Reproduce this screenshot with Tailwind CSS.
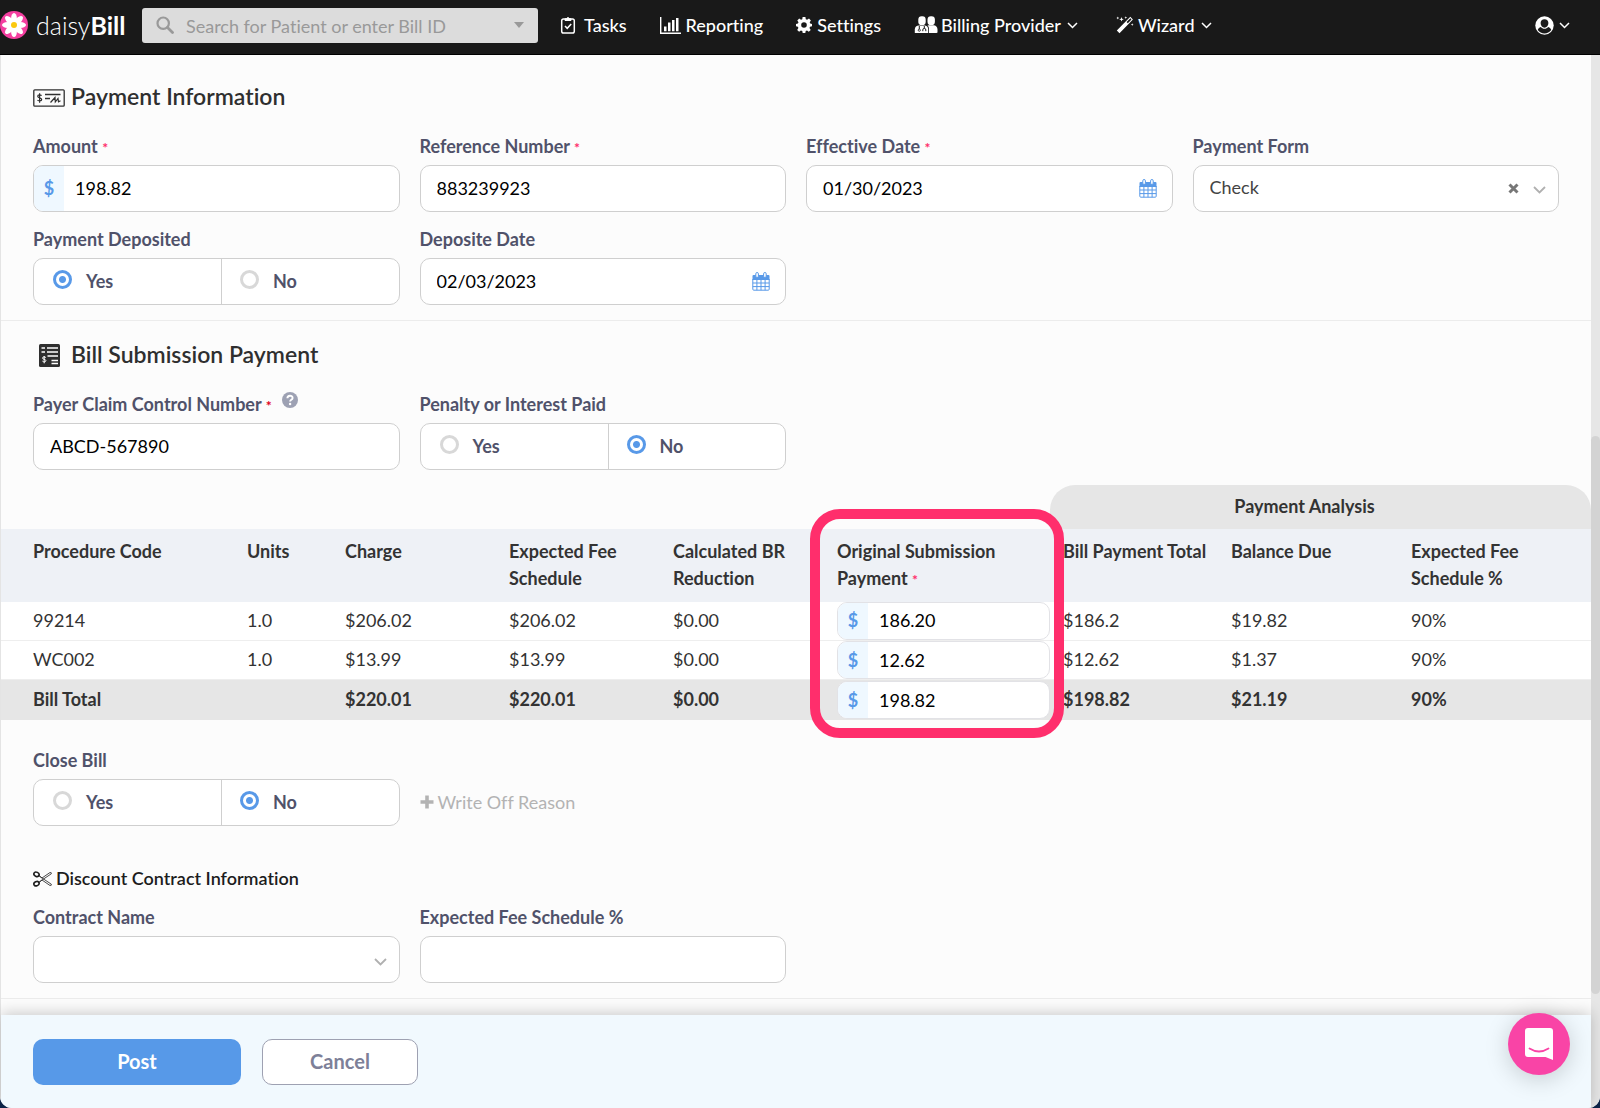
<!DOCTYPE html>
<html lang="en">
<head>
    <meta charset="UTF-8">
    <meta name="viewport" content="width=device-width, initial-scale=1.0">
    <title>daisyBill - Payment</title>
    <script src="https://cdn.jsdelivr.net/npm/@tailwindcss/browser@4"></script>
</head>
<body class="bg-[#0c2347] font-['Lato','Noto_Sans',sans-serif] [font-variant-ligatures:none] text-lg leading-6 text-[#333]">

<div class="h-screen flex flex-col overflow-hidden rounded-b-xl bg-[#fcfcfc]">

    <!-- NAVBAR -->
    <header class="flex items-center shrink-0 h-[55px] pb-1 bg-[#191919] border-b border-black text-white">
        <a href="#" class="flex items-center gap-2 w-[142px]">
            <svg class="w-7 h-7" viewBox="0 0 28 28">
                <circle cx="14" cy="14" r="14" fill="#f43fa0"/>
                <g fill="#fff">
                    <ellipse cx="14" cy="7.500" rx="2.900" ry="5.500"/>
                    <ellipse cx="14" cy="7.500" rx="2.900" ry="5.500" transform="rotate(45 14 14)"/>
                    <ellipse cx="14" cy="7.500" rx="2.900" ry="5.500" transform="rotate(90 14 14)"/>
                    <ellipse cx="14" cy="7.500" rx="2.900" ry="5.500" transform="rotate(135 14 14)"/>
                    <ellipse cx="14" cy="7.500" rx="2.900" ry="5.500" transform="rotate(180 14 14)"/>
                    <ellipse cx="14" cy="7.500" rx="2.900" ry="5.500" transform="rotate(225 14 14)"/>
                    <ellipse cx="14" cy="7.500" rx="2.900" ry="5.500" transform="rotate(270 14 14)"/>
                    <ellipse cx="14" cy="7.500" rx="2.900" ry="5.500" transform="rotate(315 14 14)"/>
                </g>
                <circle cx="14" cy="14" r="3" fill="#fbc90f"/>
            </svg>
            <span class="text-[25px] leading-7 font-light">daisy<b class="font-bold">Bill</b></span>
        </a>
        <div class="flex items-center w-[396px] h-[35px] rounded-[3px] bg-[#dcdcdc] px-3.5 text-[#999]">
            <svg class="w-[18px] h-[18px] shrink-0" viewBox="0 0 18 18" fill="none" stroke="currentColor"><circle cx="7.200" cy="7.200" r="5.700" stroke-width="2.200"/><path d="M11.500 11.500l5 5" stroke-width="2.800" stroke-linecap="round"/></svg>
            <input type="text" aria-label="Search" placeholder="Search for Patient or enter Bill ID" class="flex-1 min-w-0 ml-3 pt-0.5 bg-transparent outline-none placeholder:text-[#999]">
            <button type="button" aria-label="Open search list"><svg class="w-2.5 h-1.5" viewBox="0 0 10 6"><path d="M0 0h10L5 6z" fill="currentColor"/></svg></button>
        </div>
        <nav class="flex items-center flex-1 font-medium">
            <a href="#" class="flex items-center gap-2 ml-[22px]">
                <svg class="w-4 h-[18px]" viewBox="0 0 16 18" fill="none" stroke="currentColor" stroke-width="1.500"><rect x="1.700" y="3" width="12.600" height="14" rx="1.800"/><path d="M5 4.500V2.800h1.400a1.700 1.700 0 013.200 0H11v1.700z" fill="currentColor" stroke-width="1"/><path d="M5 10l2.200 2.300 4-4.300"/></svg>
                Tasks
            </a>
            <a href="#" class="flex items-center gap-[5px] ml-[33px]">
                <svg class="w-[21px] h-[17px]" viewBox="0 0 21 17"><path d="M.7 0v16.300H21" fill="none" stroke="currentColor" stroke-width="1.400"/><path d="M4 9.500h2.500v4.800H4zM8 5.500h2.500v8.800H8zM12 3h2.500v11.300H12zM16 1h2.500v13.300H16z" fill="currentColor"/></svg>
                Reporting
            </a>
            <a href="#" class="flex items-center gap-[5px] ml-[33px]">
                <svg class="w-4 h-4" viewBox="0 0 16 16" fill="currentColor"><path fill-rule="evenodd" d="M6.600 0h2.800l.4 2.200 1.300.55L13 1.500l1.900 1.900-1.200 1.900.5 1.300 1.800.4v2.300l-2 .5-.5 1.300 1.200 1.800-1.900 1.900-1.800-1.200-1.300.5-.4 2H6.700l-.4-2-1.400-.6-1.800 1.300-1.900-1.900 1.200-1.900-.5-1.200-1.900-.5V7l1.900-.4.6-1.400-1.200-1.800L3.200 1.500 5 2.700l1.300-.5zM8 5.200a2.800 2.800 0 100 5.600 2.800 2.800 0 000-5.600z"/></svg>
                Settings
            </a>
            <a href="#" class="flex items-center gap-[3px] ml-[33px]">
                <svg class="w-6 h-[18px]" viewBox="0 0 24 18" fill="currentColor"><rect x="4.300" y=".3" width="7.400" height="8.800" rx="3.400"/><rect x="13.500" y=".3" width="7.400" height="8.800" rx="3.400"/><path d="M.8 17v-3.500C.8 10.800 2.500 9.800 5 9.500h6c2.300.3 3.200 1.800 3.200 4V17z"/><path d="M15 17v-3.500c0-1.800-.5-3-1.500-3.900l1.300-.3h4.700c2.400.2 4 1.500 4 4.200V16.500l-1 .5z"/><path d="M5.300 10v3M10.300 10v2.200M8.800 15.200v-1.300a1.500 1.500 0 013 0v1.300" fill="none" stroke="#191919" stroke-width="1"/><circle cx="5.300" cy="14.200" r="1.100" fill="none" stroke="#191919" stroke-width=".8"/></svg>
                Billing Provider
                <svg class="w-[11px] h-[7px] ml-[3px]" viewBox="0 0 11 7"><path d="M1 1l4.500 4.500L10 1" fill="none" stroke="currentColor" stroke-width="1.500"/></svg>
            </a>
            <a href="#" class="flex items-center gap-1 ml-[38px]">
                <svg class="w-[18px] h-[18px]" viewBox="0 0 18 18" fill="currentColor"><path fill-rule="evenodd" d="M14.300.8l2.600 2.600L3.500 17.300.8 14.600zM14.400 2.200l-3.800 3.900 1.200 1.200 3.700-3.900z"/><path d="M5.500 1l.6 1.700 1.700.6-1.700.6-.6 1.700-.6-1.700-1.700-.6 1.700-.6zM1.800.6l.4 1 1 .4-1 .4-.4 1-.4-1-1-.4 1-.4zM9.800.2l.4 1 1 .4-1 .4-.4 1-.4-1-1-.4 1-.4zM16.200 7.200l.4 1 1 .4-1 .4-.4 1-.4-1-1-.4 1-.4z"/></svg>
                Wizard
                <svg class="w-[11px] h-[7px] ml-0.5" viewBox="0 0 11 7"><path d="M1 1l4.500 4.500L10 1" fill="none" stroke="currentColor" stroke-width="1.500"/></svg>
            </a>
        </nav>
        <button type="button" aria-label="Account" class="flex items-center gap-[5px] mr-[30px]">
            <svg class="w-[19px] h-[19px]" viewBox="0 0 19 19"><circle cx="9.500" cy="9.500" r="9.200" fill="#fff"/><path d="M9.500 3.200c2.400 0 3.900 1.500 3.900 3.900s-1.600 4.600-3.900 4.600-3.900-2.200-3.900-4.600 1.500-3.900 3.900-3.900z" fill="#191919"/><path d="M5.800 11c-1.700.5-2.700 1.600-3 3.100 1.700 2.300 4 3.400 6.700 3.400s5-1.100 6.700-3.400c-.3-1.500-1.300-2.600-3-3.100-1 1.200-2.200 1.800-3.700 1.800S6.800 12.200 5.800 11z" fill="#191919"/></svg>
            <svg class="w-[11px] h-[7px]" viewBox="0 0 11 7"><path d="M1 1l4.500 4.500L10 1" fill="none" stroke="currentColor" stroke-width="1.500"/></svg>
        </button>
    </header>

    <div class="flex flex-1 min-h-0">
        <div class="flex flex-col flex-1 min-w-0 border-l border-[#e4e4e4]">
            <main class="flex-1 min-h-0 overflow-hidden">

                <!-- PAYMENT INFORMATION -->
                <section class="px-8 pt-[25px] pb-[15px] border-b border-[#ececec]">
                    <h2 class="flex items-center gap-1.5 mb-[22px] text-[23px] leading-8 font-semibold text-[#2f2f2f]">
                        <svg class="w-8 h-[18px] mt-1" viewBox="0 0 32 18" fill="none" stroke="currentColor"><rect x=".8" y=".8" width="30.400" height="16.400" rx="1" stroke-width="1.300"/><path d="M8.500 6.700C8 5.800 4.700 5.400 4.700 7.300c0 1.900 4 1.300 4 3.200 0 1.800-3.500 1.600-4.200.5M6.600 4.200v9.600" stroke-width="1.200"/><path d="M12 5.500h15.500M12 9.500h5" stroke-width="1.300"/><path d="M17.500 13.500l4.500-5 .3 4.500 2.700-3.500.5 3.300 2-1" stroke-width="1.200"/></svg>
                        Payment Information
                    </h2>
                    <div class="grid grid-cols-4 gap-x-5 gap-y-[15px]">
                        <div>
                            <label for="amount" class="block mb-[7px] font-bold text-[#50526a]">Amount <span class="text-sm text-[#ff2d6b]">*</span></label>
                            <div class="flex h-[47px] rounded-[10px] border border-[#cfcfcf] bg-white overflow-hidden">
                                <span class="flex items-center justify-center w-[30px] pb-0.5 bg-[#eff8ff] text-[#5899e8] font-bold">$</span>
                                <input id="amount" type="text" value="198.82" class="flex-1 min-w-0 px-[11px] pb-0.5 text-black outline-none">
                            </div>
                        </div>
                        <div>
                            <label for="refNumber" class="block mb-[7px] font-bold text-[#50526a]">Reference Number <span class="text-sm text-[#ff2d6b]">*</span></label>
                            <input id="refNumber" type="text" value="883239923" class="block w-full h-[47px] px-4 pb-0.5 rounded-[10px] border border-[#cfcfcf] bg-white text-black outline-none">
                        </div>
                        <div>
                            <label for="effDate" class="block mb-[7px] font-bold text-[#50526a]">Effective Date <span class="text-sm text-[#ff2d6b]">*</span></label>
                            <div class="flex items-center h-[47px] pr-[15px] rounded-[10px] border border-[#cfcfcf] bg-white">
                                <input id="effDate" type="text" value="01/30/2023" class="flex-1 min-w-0 px-4 pb-0.5 text-black outline-none">
                                <svg class="w-[18px] h-[19px]" viewBox="0 0 18 19"><path d="M1.500 3h15q1 0 1 1v4H.5V4q0-1 1-1z" fill="#5899e8"/><path d="M.8 7v10.200q0 1 1 1h14.400q1 0 1-1V7M.8 11h16.400M.8 14.600h16.400M4.900 7.500v10.700M9 7.500v10.700M13.100 7.500v10.700" fill="none" stroke="#5899e8" stroke-width="1"/><rect x="3.800" y=".5" width="2.600" height="5" rx="1.300" fill="#fff" stroke="#5899e8"/><rect x="11.600" y=".5" width="2.600" height="5" rx="1.300" fill="#fff" stroke="#5899e8"/></svg>
                            </div>
                        </div>
                        <div>
                            <label for="payForm" class="block mb-[7px] font-bold text-[#50526a]">Payment Form</label>
                            <div class="flex items-center h-[47px] pr-3 rounded-[10px] border border-[#cfcfcf] bg-white">
                                <select id="payForm" class="appearance-none flex-1 min-w-0 px-4 pb-[3px] text-[#444] outline-none">
                                    <option>Check</option>
                                    <option>EFT</option>
                                </select>
                                <button type="button" aria-label="Clear" class="mr-3.5"><svg class="w-[11px] h-[11px]" viewBox="0 0 11 11"><path d="M1.500 1.500l8 8M9.500 1.500l-8 8" stroke="#777" stroke-width="3"/></svg></button>
                                <svg class="w-[13px] h-2 mt-0.5" viewBox="0 0 13 8"><path d="M1 1l5.500 5.500L12 1" fill="none" stroke="#b0b0b0" stroke-width="1.800"/></svg>
                            </div>
                        </div>
                        <fieldset>
                            <legend class="mb-[7px] font-bold text-[#50526a]">Payment Deposited</legend>
                            <div class="flex h-[47px] rounded-[10px] border border-[#cfcfcf] bg-white font-bold text-[#50526a]">
                                <label class="flex items-center gap-3.5 w-[188px] pl-[19px] pb-0.5 border-r border-[#cfcfcf]"><input type="radio" name="deposited" checked class="appearance-none w-[19px] h-[19px] mb-[3px] rounded-full border-[3px] border-[#d8d8d8] checked:border-[#5899e8] checked:bg-[radial-gradient(circle,#5899e8_3px,white_4px)]">Yes</label>
                                <label class="flex items-center gap-3.5 flex-1 pl-[18px] pb-0.5"><input type="radio" name="deposited" class="appearance-none w-[19px] h-[19px] mb-[3px] rounded-full border-[3px] border-[#d8d8d8] checked:border-[#5899e8] checked:bg-[radial-gradient(circle,#5899e8_3px,white_4px)]">No</label>
                            </div>
                        </fieldset>
                        <div>
                            <label for="depDate" class="block mb-[7px] font-bold text-[#50526a]">Deposite Date</label>
                            <div class="flex items-center h-[47px] pr-[15px] rounded-[10px] border border-[#cfcfcf] bg-white">
                                <input id="depDate" type="text" value="02/03/2023" class="flex-1 min-w-0 px-4 pb-0.5 text-black outline-none">
                                <svg class="w-[18px] h-[19px]" viewBox="0 0 18 19"><path d="M1.500 3h15q1 0 1 1v4H.5V4q0-1 1-1z" fill="#5899e8"/><path d="M.8 7v10.200q0 1 1 1h14.400q1 0 1-1V7M.8 11h16.400M.8 14.600h16.400M4.900 7.500v10.700M9 7.500v10.700M13.100 7.500v10.700" fill="none" stroke="#5899e8" stroke-width="1"/><rect x="3.800" y=".5" width="2.600" height="5" rx="1.300" fill="#fff" stroke="#5899e8"/><rect x="11.600" y=".5" width="2.600" height="5" rx="1.300" fill="#fff" stroke="#5899e8"/></svg>
                            </div>
                        </div>
                    </div>
                </section>

                <!-- BILL SUBMISSION PAYMENT -->
                <section class="pt-[17px] pb-[15px] border-b border-[#ececec]">
                    <div class="px-8">
                        <h2 class="flex items-center gap-[11px] mb-[22px] pl-1.5 text-[23px] leading-8 font-semibold text-[#2f2f2f]">
                            <svg class="w-[21px] h-[23px] mt-0.5" viewBox="0 0 21 23"><rect width="21" height="23" rx="1.500" fill="#2f2f2f"/><path d="M2.500 4h3.500M8 4h11M2.500 8h3.500M8 8h11M8.500 12h10.500M12.500 16.500h6.500M12.500 19.500h6.500" stroke="#fff" stroke-width="1.500"/><path d="M6.800 13.500c-.8-1-3.300-.8-3.300.6 0 1.500 3.400.9 3.400 2.500s-2.700 1.500-3.500.5M5.200 12v7.300" fill="none" stroke="#fff" stroke-width="1"/></svg>
                            Bill Submission Payment
                        </h2>
                        <div class="grid grid-cols-4 gap-x-5 gap-y-[15px]">
                            <div>
                                <div class="flex mb-[7px]">
                                    <label for="claimNumber" class="font-bold text-[#50526a]">Payer Claim Control Number <span class="text-sm text-[#e00020]">*</span></label>
                                    <svg class="w-4 h-4 ml-2.5" viewBox="0 0 16 16"><circle cx="8" cy="8" r="8" fill="#9da1b3"/><path d="M5.400 6.200c0-3.300 5.200-3.300 5.200-.3 0 1.900-2.500 1.900-2.500 3.600" fill="none" stroke="#fff" stroke-width="1.900"/><circle cx="8.100" cy="12" r="1.200" fill="#fff"/></svg>
                                </div>
                                <input id="claimNumber" type="text" value="ABCD-567890" class="block w-full h-[47px] px-4 pb-0.5 rounded-[10px] border border-[#cfcfcf] bg-white text-black outline-none">
                            </div>
                            <fieldset>
                                <legend class="mb-[7px] font-bold text-[#50526a]">Penalty or Interest Paid</legend>
                                <div class="flex h-[47px] rounded-[10px] border border-[#cfcfcf] bg-white font-bold text-[#50526a]">
                                    <label class="flex items-center gap-3.5 w-[188px] pl-[19px] pb-0.5 border-r border-[#cfcfcf]"><input type="radio" name="penalty" class="appearance-none w-[19px] h-[19px] mb-[3px] rounded-full border-[3px] border-[#d8d8d8] checked:border-[#5899e8] checked:bg-[radial-gradient(circle,#5899e8_3px,white_4px)]">Yes</label>
                                    <label class="flex items-center gap-3.5 flex-1 pl-[18px] pb-0.5"><input type="radio" name="penalty" checked class="appearance-none w-[19px] h-[19px] mb-[3px] rounded-full border-[3px] border-[#d8d8d8] checked:border-[#5899e8] checked:bg-[radial-gradient(circle,#5899e8_3px,white_4px)]">No</label>
                                </div>
                            </fieldset>
                        </div>
                    </div>

                    <table class="table-fixed w-full mt-[15px] text-left border-separate border-spacing-0">
                        <colgroup>
                            <col class="w-[233px]"><col class="w-[98px]"><col class="w-[164px]"><col class="w-[164px]"><col class="w-[164px]"><col class="w-[226px]"><col class="w-[168px]"><col class="w-[180px]"><col class="w-[193px]">
                        </colgroup>
                        <thead class="leading-[27px]">
                            <tr class="h-11">
                                <td colspan="6"></td>
                                <th colspan="3" class="pr-8 pb-0.5 rounded-t-[25px] bg-[#e6e6e6] text-center font-bold">Payment Analysis</th>
                            </tr>
                            <tr class="align-top bg-[#eef1f6] [&>th]:pt-[9px] [&>th]:pb-2.5 [&>th]:pl-[13px] [&>th]:font-bold">
                                <th class="pl-8!">Procedure Code</th>
                                <th>Units</th>
                                <th>Charge</th>
                                <th>Expected Fee<br>Schedule</th>
                                <th>Calculated BR<br>Reduction</th>
                                <th class="relative">Original Submission<br>Payment <span class="text-sm text-[#ff2d6b]">*</span>
                                    <!-- highlight round the payment column -->
                                    <span class="absolute z-10 pointer-events-none -left-3.5 -right-3.5 -top-5 h-[229px] rounded-[30px] border-10 border-[#ff2e6c]"></span>
                                </th>
                                <th class="whitespace-nowrap">Bill Payment Total</th>
                                <th>Balance Due</th>
                                <th>Expected Fee<br>Schedule %</th>
                            </tr>
                        </thead>
                        <tbody class="[&_td]:pl-[13px] [&_td]:pb-0.5">
                            <tr class="h-[39px] bg-white [&>td]:border-b [&>td]:border-[#eeeeee]">
                                <td class="pl-8!">99214</td>
                                <td>1.0</td>
                                <td>$206.02</td>
                                <td>$206.02</td>
                                <td>$0.00</td>
                                <td class="pb-0!">
                                    <div class="flex h-[38px] rounded-[10px] border border-[#e2e2e6] bg-white overflow-hidden">
                                        <span class="flex items-center justify-center w-[30px] pb-0.5 bg-[#eff8ff] text-[#5899e8] font-bold">$</span>
                                        <input type="text" aria-label="Payment 99214" value="186.20" class="flex-1 min-w-0 px-[11px] pb-0.5 text-black outline-none">
                                    </div>
                                </td>
                                <td>$186.2</td>
                                <td>$19.82</td>
                                <td>90%</td>
                            </tr>
                            <tr class="h-[39px] bg-white [&>td]:border-b [&>td]:border-[#eeeeee]">
                                <td class="pl-8!">WC002</td>
                                <td>1.0</td>
                                <td>$13.99</td>
                                <td>$13.99</td>
                                <td>$0.00</td>
                                <td class="pb-0!">
                                    <div class="flex h-[38px] rounded-[10px] border border-[#e2e2e6] bg-white overflow-hidden">
                                        <span class="flex items-center justify-center w-[30px] bg-[#eff8ff] text-[#5899e8] font-bold">$</span>
                                        <input type="text" aria-label="Payment WC002" value="12.62" class="flex-1 min-w-0 px-[11px] text-black outline-none">
                                    </div>
                                </td>
                                <td>$12.62</td>
                                <td>$1.37</td>
                                <td>90%</td>
                            </tr>
                            <tr class="h-10 bg-[#e6e6e6] font-bold">
                                <td class="pl-8!">Bill Total</td>
                                <td></td>
                                <td>$220.01</td>
                                <td>$220.01</td>
                                <td>$0.00</td>
                                <td class="pb-0!">
                                    <div class="flex h-[38px] rounded-[10px] border border-[#e2e2e6] bg-white overflow-hidden">
                                        <span class="flex items-center justify-center w-[30px] bg-[#eff8ff] text-[#5899e8]">$</span>
                                        <input type="text" aria-label="Payment total" value="198.82" class="flex-1 min-w-0 px-[11px] font-normal text-black outline-none">
                                    </div>
                                </td>
                                <td>$198.82</td>
                                <td>$21.19</td>
                                <td>90%</td>
                            </tr>
                        </tbody>
                    </table>

                    <div class="grid grid-cols-4 gap-x-5 px-8 mt-7">
                        <fieldset>
                            <legend class="mb-[7px] font-bold text-[#50526a]">Close Bill</legend>
                            <div class="flex h-[47px] rounded-[10px] border border-[#cfcfcf] bg-white font-bold text-[#50526a]">
                                <label class="flex items-center gap-3.5 w-[188px] pl-[19px] pb-0.5 border-r border-[#cfcfcf]"><input type="radio" name="closeBill" class="appearance-none w-[19px] h-[19px] mb-[3px] rounded-full border-[3px] border-[#d8d8d8] checked:border-[#5899e8] checked:bg-[radial-gradient(circle,#5899e8_3px,white_4px)]">Yes</label>
                                <label class="flex items-center gap-3.5 flex-1 pl-[18px] pb-0.5"><input type="radio" name="closeBill" checked class="appearance-none w-[19px] h-[19px] mb-[3px] rounded-full border-[3px] border-[#d8d8d8] checked:border-[#5899e8] checked:bg-[radial-gradient(circle,#5899e8_3px,white_4px)]">No</label>
                            </div>
                        </fieldset>
                        <button type="button" class="flex items-center self-end gap-1 h-[47px] pb-0.5 text-[#b3b3b3]">
                            <svg class="w-3.5 h-3.5" viewBox="0 0 14 14"><path d="M7 .5v13M.5 7h13" stroke="currentColor" stroke-width="3.600"/></svg>
                            Write Off Reason
                        </button>
                    </div>

                    <div class="px-8 mt-10">
                        <h3 class="flex items-center gap-1 mb-[15px] font-semibold text-[#1d1d1d]">
                            <svg class="w-[19px] h-4 mt-0.5" viewBox="0 0 19 16" fill="none" stroke="currentColor"><ellipse cx="3.500" cy="3.300" rx="2.700" ry="2.100" transform="rotate(25 3.500 3.300)" stroke-width="1.600"/><ellipse cx="3.500" cy="12.700" rx="2.700" ry="2.100" transform="rotate(-25 3.500 12.700)" stroke-width="1.600"/><path d="M5.800 4.500L9 7l8-5.500 1.300.3v1L8.300 9.500l-2.500 2M5.800 11.500L9 9l8 5.500 1.300-.3v-1L8.300 6.500l-2.500-2" stroke-width=".8"/></svg>
                            Discount Contract Information
                        </h3>
                        <div class="grid grid-cols-4 gap-x-5">
                            <div>
                                <label for="contract" class="block mb-[7px] font-bold text-[#50526a]">Contract Name</label>
                                <div class="flex items-center h-[47px] pr-3 rounded-[10px] border border-[#cfcfcf] bg-white">
                                    <select id="contract" class="appearance-none flex-1 min-w-0 px-4 outline-none">
                                        <option></option>
                                    </select>
                                    <svg class="w-[13px] h-2 mt-1" viewBox="0 0 13 8"><path d="M1 1l5.500 5.500L12 1" fill="none" stroke="#b0b0b0" stroke-width="1.800"/></svg>
                                </div>
                            </div>
                            <div>
                                <label for="feePercent" class="block mb-[7px] font-bold text-[#50526a]">Expected Fee Schedule %</label>
                                <input id="feePercent" type="text" class="block w-full h-[47px] px-4 pb-0.5 rounded-[10px] border border-[#cfcfcf] bg-white text-black outline-none">
                            </div>
                        </div>
                    </div>
                </section>
            </main>

            <!-- ACTIONS -->
            <footer class="relative flex items-start gap-[21px] h-[93px] shrink-0 px-8 pt-6 bg-[#f1f9fe] shadow-[0_-2px_14px_rgba(0,0,0,0.2)] text-xl font-bold">
                <button type="button" class="w-52 h-[46px] pb-0.5 rounded-[10px] bg-[#5799e8] text-white">Post</button>
                <button type="button" class="w-[156px] h-[46px] pb-0.5 rounded-[10px] border border-[#9ea1b2] bg-white text-[#7d8098]">Cancel</button>
                <button type="button" aria-label="Open chat" class="absolute right-[21px] -top-0.5 flex items-center justify-center w-[62px] h-[62px] rounded-full bg-[#f944a6] shadow-[0_4px_24px_rgba(0,0,0,0.18)]">
                    <svg class="w-7 h-8" viewBox="0 0 28 32"><path d="M3 0h22q3 0 3 3v29l-7.500-3H3q-3 0-3-3V3q0-3 3-3z" fill="#fff"/><path d="M4.500 20.500q9.500 6 19 0" fill="none" stroke="#f944a6" stroke-width="1.800" stroke-linecap="round"/></svg>
                </button>
            </footer>
        </div>

        <!-- scrollbar -->
        <div class="flex flex-col w-[9px] bg-[#e6e6e6] pt-[381px]">
            <div class="h-[558px] rounded-full bg-[#d3d3d3]"></div>
        </div>
    </div>
</div>

</body>
</html>
